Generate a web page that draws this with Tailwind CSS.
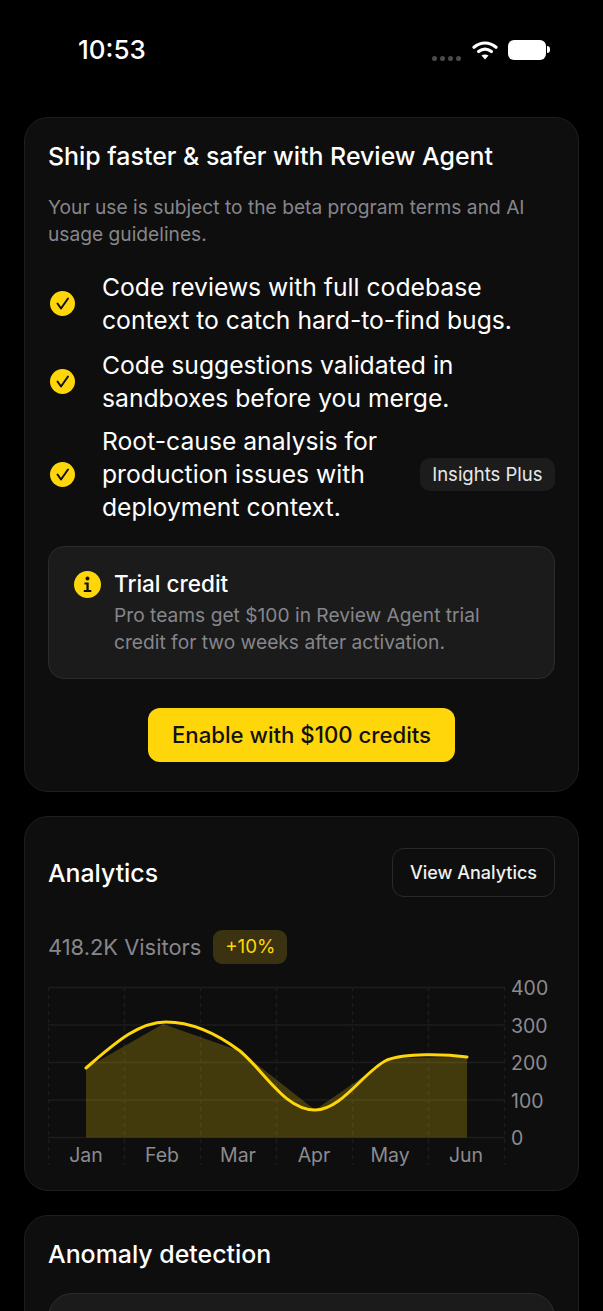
<!DOCTYPE html>
<html lang="en">
<head>
    <meta charset="UTF-8">
    <meta name="viewport" content="width=device-width, initial-scale=1.0">
    <title>Review Agent</title>
    <script src="https://cdn.jsdelivr.net/npm/@tailwindcss/browser@4"></script>
</head>
<body class="bg-black font-['Inter',sans-serif] text-white">
<div class="h-[1311px] overflow-hidden">
    <!-- Status bar -->
    <div class="h-[117px] relative">
        <div class="absolute left-[78px] top-[34px] text-[26px] leading-[32px] font-medium">10:53</div>
        <div class="absolute left-[432px] top-[38px] flex items-center">
            <div class="flex gap-[3px] mt-[18px]">
                <span class="w-[5px] h-[5px] rounded-full bg-[#4a4a4a]"></span>
                <span class="w-[5px] h-[5px] rounded-full bg-[#4a4a4a]"></span>
                <span class="w-[5px] h-[5px] rounded-full bg-[#4a4a4a]"></span>
                <span class="w-[5px] h-[5px] rounded-full bg-[#4a4a4a]"></span>
            </div>
            <svg class="ml-[11px]" width="26" height="20" viewBox="0 0 26 20" fill="none">
                <path d="M2 7.2C8.6 1.6 17.4 1.6 24 7.2" stroke="#fff" stroke-width="3.2" stroke-linecap="round"/>
                <path d="M6.6 11.6C10.6 8.4 15.4 8.4 19.4 11.6" stroke="#fff" stroke-width="3.2" stroke-linecap="round"/>
                <path d="M13 19.5 9.5 15.6C11.6 14 14.4 14 16.5 15.6Z" fill="#fff"/>
            </svg>
            <div class="ml-[10px] w-[38px] h-[20px] rounded-[6px] bg-white"></div>
            <div class="ml-[1px] w-[3px] h-[7px] rounded-r-full bg-white"></div>
        </div>
    </div>

    <div class="px-[24px] flex flex-col gap-[24px]">
        <!-- Review Agent card -->
        <section class="h-[675px] rounded-[24px] border-[1.5px] border-[#1e1e1e] bg-[#0e0e0e] px-[23px] pt-[22px]">
            <h2 class="text-[24.9px] leading-[33px] font-medium">Ship faster &amp; safer with Review Agent</h2>
            <p class="mt-[21px] text-[19.2px] leading-[27px] text-[#86868b]">Your use is subject to the beta program terms and AI usage guidelines.</p>
            <ul class="mt-[23px] flex flex-col gap-[12px]">
                <li class="flex items-center">
                    <svg class="ml-[2px] -mt-[2px] shrink-0" width="25" height="25" viewBox="0 0 25 25"><circle cx="12.5" cy="12.5" r="12.5" fill="#ffd60a"/><path d="M7.5 12.5l3.5 5L18 7.5" fill="none" stroke="#111" stroke-width="2" stroke-linecap="round" stroke-linejoin="round"/></svg>
                    <span class="ml-[27px] text-[24.7px] leading-[33px]">Code reviews with full codebase context to catch hard-to-find bugs.</span>
                </li>
                <li class="flex items-center">
                    <svg class="ml-[2px] -mt-[2px] shrink-0" width="25" height="25" viewBox="0 0 25 25"><circle cx="12.5" cy="12.5" r="12.5" fill="#ffd60a"/><path d="M7.5 12.5l3.5 5L18 7.5" fill="none" stroke="#111" stroke-width="2" stroke-linecap="round" stroke-linejoin="round"/></svg>
                    <span class="ml-[27px] text-[24.7px] leading-[33px]">Code suggestions validated in sandboxes before you merge.</span>
                </li>
                <li class="flex items-center -mt-[2px]">
                    <svg class="ml-[2px] shrink-0" width="25" height="25" viewBox="0 0 25 25"><circle cx="12.5" cy="12.5" r="12.5" fill="#ffd60a"/><path d="M7.5 12.5l3.5 5L18 7.5" fill="none" stroke="#111" stroke-width="2" stroke-linecap="round" stroke-linejoin="round"/></svg>
                    <span class="ml-[27px] w-[290px] text-[24.7px] leading-[33px]">Root-cause analysis for production issues with deployment context.</span>
                    <span class="ml-auto h-[33px] px-[12.5px] rounded-[10px] bg-[#1c1c1c] text-[18.5px] leading-[33px] text-[#e8e8e8]">Insights Plus</span>
                </li>
            </ul>
            <div class="mt-[22px] h-[133px] rounded-[16px] border-[1.5px] border-[#2c2c2c] bg-[#1b1b1b] pl-[25px] pt-[23px] flex items-start">
                <svg class="shrink-0 mt-[1px]" width="27" height="27" viewBox="0 0 27 27"><circle cx="13.5" cy="13.5" r="13.5" fill="#ffd60a"/><circle cx="13.5" cy="7.5" r="2" fill="#111"/><path d="M10.5 11.5h4.2v7.5h2.6v2H9.8v-2h2.6v-5.5h-1.9z" fill="#111"/></svg>
                <div class="ml-[13px]">
                    <div class="text-[22.5px] leading-[27px] font-medium">Trial credit</div>
                    <p class="mt-[5px] w-[400px] text-[19.2px] leading-[27px] text-[#86868b]">Pro teams get $100 in Review Agent trial credit for two weeks after activation.</p>
                </div>
            </div>
            <div class="mt-[29px] flex justify-center">
                <button class="w-[307px] h-[54px] rounded-[12px] bg-[#ffd60a] text-[#111] text-[22.2px] font-medium">Enable with $100 credits</button>
            </div>
        </section>

        <!-- Analytics card -->
        <section class="h-[375px] rounded-[24px] border-[1.5px] border-[#1e1e1e] bg-[#0e0e0e] px-[23px] pt-[31px]">
            <div class="flex items-center justify-between">
                <h2 class="mt-[2px] text-[24.8px] leading-[33px] font-medium">Analytics</h2>
                <button class="w-[163px] h-[49px] rounded-[12px] border-[1.5px] border-[#2a2a2a] text-[18px] font-medium text-[#f0f0f0]">View Analytics</button>
            </div>
            <div class="mt-[33px] flex items-center">
                <span class="text-[21.9px] leading-[33px] text-[#86868b]">418.2K Visitors</span>
                <span class="ml-[12px] w-[74px] h-[34px] rounded-[9px] bg-[#3a3210] text-center text-[18.8px] leading-[34px] text-[#ffd60a]">+10%</span>
            </div>
            <svg class="mt-[11px] block" width="507" height="194" viewBox="48 975 507 194" font-family="Inter, sans-serif" font-size="19.5" fill="#8b8b90">
                <g stroke="#1d1d1d" stroke-width="1.5">
                    <path d="M48 987.5H505M48 1025H505M48 1062.5H505M48 1100H505M48 1137.5H505"/>
                    <path stroke-dasharray="4 4" d="M48.5 987V1165M124.5 987V1165M200.5 987V1165M276.5 987V1165M352.5 987V1165M428.5 987V1165M504.5 987V1165"/>
                </g>
                <path d="M86 1068 163 1024 240 1051 315 1110 390 1058 467 1057V1137.5H86Z" fill="#ffd60a" fill-opacity=".22"/>
                <path d="M86 1068C112 1046 137 1022 166 1022C195 1022 220 1036 240 1051C265 1072 285 1110 315 1110C342 1110 365 1070 387 1060C405 1053 445 1054 467 1057" fill="none" stroke="#ffd60a" stroke-width="3" stroke-linecap="round"/>
                <g text-anchor="middle">
                    <text x="86" y="1162">Jan</text>
                    <text x="162" y="1162">Feb</text>
                    <text x="238" y="1162">Mar</text>
                    <text x="314" y="1162">Apr</text>
                    <text x="390" y="1162">May</text>
                    <text x="466" y="1162">Jun</text>
                </g>
                <g>
                    <text x="511" y="995">400</text>
                    <text x="511" y="1033">300</text>
                    <text x="511" y="1070">200</text>
                    <text x="511" y="1107.5">100</text>
                    <text x="511" y="1145">0</text>
                </g>
            </svg>
        </section>

        <!-- Anomaly detection card -->
        <section class="h-[300px] rounded-[24px] border-[1.5px] border-[#1e1e1e] bg-[#0e0e0e] px-[23px] pt-[22px]">
            <h2 class="text-[24.9px] leading-[33px] font-medium">Anomaly detection</h2>
            <div class="mt-[22px] h-[150px] rounded-[24px] border-[1.5px] border-[#2c2c2c] bg-[#1b1b1b]"></div>
        </section>
    </div>
</div>
</body>
</html>
